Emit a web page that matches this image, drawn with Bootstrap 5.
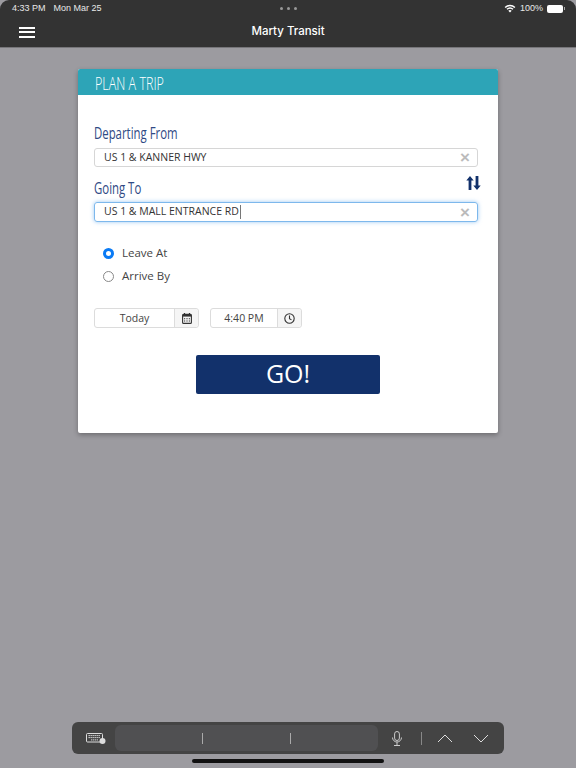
<!DOCTYPE html>
<html lang="en">
<head>
  <meta charset="UTF-8" />
  <meta name="viewport" content="width=device-width, initial-scale=1.0" />
  <title>Marty Transit</title>
  <link href="https://cdn.jsdelivr.net/npm/bootstrap@5.3.0/dist/css/bootstrap.min.css" rel="stylesheet"/>
  <style>
    html, body { height: 100%; }
    body {
      background: #9c9ba0;
      font-family: "Open Sans", sans-serif;
      color: #333;
      overflow: hidden;
    }
    .app-shell { height: 768px; }

    .top-bar { background: #333; color: #fff; height: 48px; border-bottom: 1px solid #77767a; border-radius: 9px 9px 0 0; }
    .status-row { height: 16px; padding: 1px 11px 0 12px; font-family: "Liberation Sans", sans-serif; font-size: 9px; color: #e8e8e8; }
    .status-side { width: 180px; }
    .status-dots i { width: 3px; height: 3px; background: #999; border-radius: 50%; display: block; }
    .title-row { height: 31px; padding: 1px 19px 0; }
    .app-title { font-family: "Inter", sans-serif; font-size: 11.5px; font-weight: 500; }
    .burger { width: 16px; gap: 2.5px; }
    .burger i { display: block; height: 2px; background: #fff; }
    .title-spacer { width: 16px; }
    .batt { width: 16px; height: 8px; background: #fff; border-radius: 2px; }
    .batt-nub { width: 1px; height: 3px; background: #aaa; margin-left: -3px; }

    .trip-card { width: 420px; height: 364px; margin-top: 21px; border-radius: 2px; box-shadow: 0 2px 5px rgba(0,0,0,.3); border: 0; }
    .trip-head { background: #2da4b7; height: 26px; padding-left: 17px; color: #fff; border-radius: 2px 2px 0 0; }
    .condensed { font-family: "Open Sans", sans-serif; display: inline-block; transform-origin: left center; white-space: nowrap; }
    .trip-head .condensed { font-size: 19px; font-weight: 300; line-height: 28px; transform: scaleX(.66); }
    .trip-body { padding: 28px 20px 0 16px; }
    .field-label { color: #2f4a85; font-size: 16.5px; line-height: 20px; margin-bottom: 5px; }
    .field-label .condensed { transform: scaleX(.69); }
    .place-box { height: 20px; border: 1px solid #d6d6d6; border-radius: 3px; font-size: 10.5px; padding: 0 7px 0 9px; color: #333; }
    .place-box.first-box { height: 19px; }
    .place-box.focused { border-color: #7db8ec; box-shadow: 0 0 4px rgba(90,165,235,.6); }
    .caret-bar { display: inline-block; width: 1px; height: 14px; background: #777; margin-left: 1px; vertical-align: middle; }
    .clear-x { font-family: "Liberation Sans", sans-serif; color: #bbb; font-size: 17px; font-weight: 700; line-height: 1; }
    .swap-row { height: 35px; padding-top: 9px; margin-right: -4px; }
    .swap-row .field-label { margin-top: 2px; }

    .radio-group { margin-top: 25px; padding-left: 9px; font-size: 11.5px; gap: 11px; }
    .radio-line { height: 12px; gap: 8px; color: #444; }
    .radio-dot { width: 11px; height: 11px; border-radius: 50%; border: 1px solid #888; flex: none; }
    .radio-dot.on { border: 3px solid #0a7bf5; }

    .when-row { margin-top: 26px; gap: 11px; font-size: 10.5px; }
    .when-group { height: 20px; border: 1px solid #dcdcdc; border-radius: 3px; }
    .when-value { color: #444; padding-top: 1px; }
    .when-date { width: 79px; }
    .when-time { width: 66px; }
    .when-icon { width: 24px; background: #f5f5f5; border-left: 1px solid #dcdcdc; border-radius: 0 3px 3px 0; }

    .go-btn { width: 184px; height: 39px; background: #12316b; color: #fff; font-size: 25px; line-height: 1; margin-top: 27px; margin-left: 4px; border: 0; border-radius: 2px; padding: 0 0 2px; }
    .go-btn:hover { background: #12316b; color: #fff; }

    .kb-bar { width: 432px; height: 32px; background: #444; border-radius: 6px; margin-top: auto; }
    .kb-key { flex: none; width: 43px; }
    .kb-keys { flex: none; width: 263px; height: 26px; background: #505052; border-radius: 6px; }
    .kb-keys i { width: 1px; height: 11px; background: #aaa; display: block; }
    .kb-mic { width: 38px; }
    .kb-sep { flex: none; width: 1px; height: 13px; background: #888; margin: 0 5px; }
    .kb-arrow { width: 36px; }
    .home-line { width: 192px; height: 4px; background: #111; border-radius: 2px; margin: 5px auto; }
  </style>
</head>

<body>
  <div class="app-shell d-flex flex-column">

    <!-- status + nav -->
    <div class="top-bar flex-shrink-0">
      <div class="status-row d-flex align-items-center justify-content-between">
        <div class="status-side d-flex gap-2"><span>4:33 PM</span><span>Mon Mar 25</span></div>
        <div class="status-dots d-flex gap-1"><i></i><i></i><i></i></div>
        <div class="status-side d-flex align-items-center justify-content-end gap-1">
          <svg width="12" height="9" viewBox="0 0 12 9"><path d="M6 8.6 4.3 6.7a2.5 2.5 0 0 1 3.4 0zM3.4 5.8 2.5 4.8a5.2 5.2 0 0 1 7 0l-.9 1a3.9 3.9 0 0 0-5.2 0zM1.6 3.9.6 2.9a7.9 7.9 0 0 1 10.8 0l-1 1a6.5 6.5 0 0 0-8.8 0z" fill="#fff"/></svg>
          <span>100%</span>
          <div class="batt"></div>
          <div class="batt-nub"></div>
        </div>
      </div>
      <div class="title-row d-flex align-items-center justify-content-between">
        <div class="burger d-flex flex-column"><i></i><i></i><i></i></div>
        <div class="app-title">Marty Transit</div>
        <div class="title-spacer"></div>
      </div>
    </div>

    <!-- plan a trip -->
    <div class="card trip-card align-self-center">
      <div class="trip-head"><span class="condensed">PLAN A TRIP</span></div>
      <div class="trip-body d-flex flex-column">
        <div class="field-label"><span class="condensed">Departing From</span></div>
        <div class="place-box first-box d-flex align-items-center justify-content-between">
          <span>US 1 &amp; KANNER HWY</span><span class="clear-x">×</span>
        </div>
        <div class="swap-row d-flex justify-content-between">
          <div class="field-label"><span class="condensed">Going To</span></div>
          <svg width="17" height="14" viewBox="0 0 16 14"><path d="M4.5 0 8.2 4.6H5.9V14H3.1V4.6H.8zM11.5 14 7.8 9.4h2.3V0h2.8v9.4h2.3z" fill="#12316b"/></svg>
        </div>
        <div class="place-box focused d-flex align-items-center justify-content-between">
          <span>US 1 &amp; MALL ENTRANCE RD<span class="caret-bar"></span></span><span class="clear-x">×</span>
        </div>

        <div class="radio-group d-flex flex-column">
          <div class="radio-line d-flex align-items-center"><span class="radio-dot on"></span><span>Leave At</span></div>
          <div class="radio-line d-flex align-items-center"><span class="radio-dot"></span><span>Arrive By</span></div>
        </div>

        <div class="when-row d-flex">
          <div class="when-group d-flex">
            <div class="when-value when-date d-flex align-items-center justify-content-center">Today</div>
            <div class="when-icon d-flex align-items-center justify-content-center">
              <svg width="10" height="11" viewBox="0 0 10 11"><path d="M2.5 0v2M7.5 0v2" stroke="#333" stroke-width="1.2"/><rect x=".6" y="1.4" width="8.8" height="9" rx="1" fill="none" stroke="#333" stroke-width="1.1"/><path d="M.6 1.4h8.8v2.2H.6z" fill="#333"/><path d="M2 5.2h1.2v1H2zM4.4 5.2h1.2v1H4.4zM6.8 5.2H8v1H6.8zM2 7.6h1.2v1H2zM4.4 7.6h1.2v1H4.4zM6.8 7.6H8v1H6.8z" fill="#333"/></svg>
            </div>
          </div>
          <div class="when-group d-flex">
            <div class="when-value when-time d-flex align-items-center justify-content-center">4:40 PM</div>
            <div class="when-icon d-flex align-items-center justify-content-center">
              <svg width="11" height="11" viewBox="0 0 11 11"><circle cx="5.5" cy="5.5" r="4.7" fill="none" stroke="#333" stroke-width="1.1"/><path d="M5.5 2.6v3.1l2 1.2" fill="none" stroke="#333" stroke-width="1.1"/></svg>
            </div>
          </div>
        </div>

        <button class="btn go-btn align-self-center" type="button">GO!</button>
      </div>
    </div>

    <!-- on-screen keyboard bar -->
    <div class="kb-bar align-self-center d-flex align-items-center flex-shrink-0">
      <div class="kb-key d-flex justify-content-center ps-1">
        <svg width="20" height="11" viewBox="0 0 20 11"><rect x=".5" y=".5" width="16" height="8.5" rx="1" fill="none" stroke="#ddd"/><path d="M2.5 2.6h12M2.5 4.6h12M5 6.9h7" stroke="#ddd" stroke-dasharray="1.4 .6"/><circle cx="16.5" cy="8" r="3" fill="#ddd"/></svg>
      </div>
      <div class="kb-keys d-flex align-items-center justify-content-evenly"><i></i><i></i></div>
      <div class="kb-key kb-mic d-flex justify-content-center">
        <svg width="12" height="15" viewBox="0 0 12 15"><rect x="3.6" y=".5" width="4.8" height="9" rx="2.4" fill="none" stroke="#ccc"/><path d="M1.5 6.5a4.5 4.5 0 0 0 9 0M6 11v3M3 14.5h6" fill="none" stroke="#ccc"/></svg>
      </div>
      <div class="kb-sep"></div>
      <div class="kb-key kb-arrow d-flex justify-content-center">
        <svg width="16" height="9" viewBox="0 0 16 9"><path d="M1 8 8 1l7 7" fill="none" stroke="#ddd"/></svg>
      </div>
      <div class="kb-key kb-arrow d-flex justify-content-center">
        <svg width="16" height="9" viewBox="0 0 16 9"><path d="M1 1l7 7 7-7" fill="none" stroke="#ddd"/></svg>
      </div>
    </div>
    <div class="home-line flex-shrink-0"></div>
  </div>
</body>
</html>
